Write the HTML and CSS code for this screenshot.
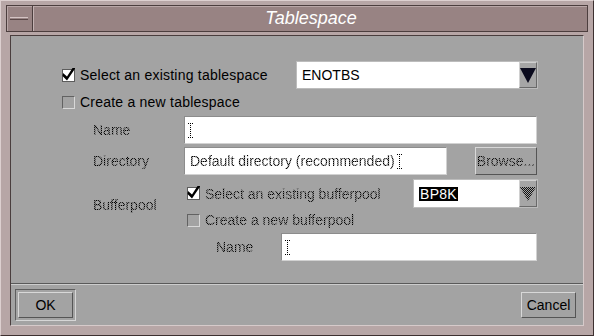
FILE: index.html
```html
<!DOCTYPE html>
<html>
<head>
<meta charset="utf-8">
<title>Tablespace</title>
<link rel="stylesheet" href="styles.css">
</head>
<body>
<svg width="0" height="0" class="defs">
  <defs>
    <pattern id="stip" width="2" height="2" patternUnits="userSpaceOnUse">
      <rect x="0" y="0" width="1" height="1" fill="#111"/>
      <rect x="1" y="1" width="1" height="1" fill="#111"/>
    </pattern>
  </defs>
</svg>
<div class="window">
  <div class="titlebar">
    <div class="menubtn"><span class="menubar"></span></div>
    <div class="title">Tablespace</div>
  </div>
  <div class="panel">
    <div class="form">
      <div class="row row-main">
        <div class="check check-main">
          <span class="box box-on"><svg width="13" height="13" viewBox="0 0 13 13"><path d="M1 5 L5 8.5 L10.5 0 L13.5 0 L5 12.5 L0.5 8 Z" fill="#000"/></svg></span>
          <span class="txt en">Select an existing tablespace</span>
        </div>
        <div class="combo combo-main">
          <div class="combo-value">ENOTBS</div>
          <div class="combo-arrow"><svg width="16" height="16" viewBox="0 0 16 16"><path d="M0 1 H16 L8 16 Z" fill="#0b0b1e"/></svg></div>
        </div>
      </div>
      <div class="row row-small">
        <div class="check">
          <span class="box box-off"></span>
          <span class="txt en">Create a new tablespace</span>
        </div>
      </div>
      <div class="row row-field gap6">
        <div class="label dis">Name</div>
        <div class="field field-name"><svg class="ibeam" width="5" height="15" viewBox="0 0 5 15"><path d="M0 0.5H5M0 14.5H5M2.5 0V15" stroke="#000" stroke-width="1" stroke-dasharray="1 1"/></svg></div>
      </div>
      <div class="row row-field gap3">
        <div class="label dis">Directory</div>
        <div class="field field-dir"><span class="dis">Default directory (recommended)</span><svg class="ibeam" width="5" height="15" viewBox="0 0 5 15"><path d="M0 0.5H5M0 14.5H5M2.5 0V15" stroke="#000" stroke-width="1" stroke-dasharray="1 1"/></svg></div>
        <div class="btn btn-browse"><span class="dis">Browse...</span></div>
      </div>
      <div class="buffer">
        <div class="label buffer-label dis">Bufferpool</div>
        <div class="buffer-rows">
          <div class="row row-buf1">
            <div class="check check-buf">
              <span class="box box-on"><svg width="13" height="13" viewBox="0 0 13 13"><path d="M1 5 L5 8.5 L10.5 0 L13.5 0 L5 12.5 L0.5 8 Z" fill="#000"/></svg></span>
              <span class="txt dis">Select an existing bufferpool</span>
            </div>
            <div class="combo combo-buf">
              <div class="combo-value"><span class="sel">BP8K</span></div>
              <div class="combo-arrow"><svg width="16" height="14" viewBox="0 0 16 14"><path d="M0 0 H16 L8 14 Z" fill="url(#stip)"/></svg></div>
            </div>
          </div>
          <div class="row row-small row-buf2">
            <div class="check">
              <span class="box box-off"></span>
              <span class="txt dis">Create a new bufferpool</span>
            </div>
          </div>
        </div>
      </div>
      <div class="row row-field row-bufname">
        <div class="label label-bufname dis">Name</div>
        <div class="field field-bufname"><svg class="ibeam" width="5" height="15" viewBox="0 0 5 15"><path d="M0 0.5H5M0 14.5H5M2.5 0V15" stroke="#000" stroke-width="1" stroke-dasharray="1 1"/></svg></div>
      </div>
    </div>
    <div class="sep"></div>
    <div class="buttons">
      <div class="default-ring"><div class="btn btn-action">OK</div></div>
      <div class="btn btn-action">Cancel</div>
    </div>
  </div>
</div>
</body>
</html>
```

FILE: styles.css
```css
* { box-sizing: border-box; }
html, body { margin: 0; padding: 0; }
body {
  width: 594px;
  height: 336px;
  overflow: hidden;
  background: #b7a6a6;
  font-family: "Liberation Sans", Arial, sans-serif;
  font-size: 14px;
  color: #000;
}
.defs { display: block; width: 0; height: 0; }

.window {
  width: 594px;
  height: 336px;
  background: #b7a6a6;
  border: 1px solid;
  border-color: #ddd0d0 #3d3030 #3d3030 #ddd0d0;
  padding: 4px 5px 9px 5px;
  display: flex;
  flex-direction: column;
}

.titlebar {
  height: 27px;
  flex: none;
  display: flex;
  background: #988383;
  border: 1px solid #4c3e3e;
  box-shadow: inset 1px 1px #b9a7a7;
}
.menubtn {
  width: 26px;
  flex: none;
  border-right: 1px solid #4c3e3e;
  box-shadow: 1px 0 #c4b3b3;
  padding: 11px 0 0 3px;
}
.menubar {
  display: block;
  width: 18px;
  height: 3px;
  background: #9a8585;
  border-top: 1px solid #d4c4c4;
  border-bottom: 1px solid #5a4848;
}
.title {
  flex: 1;
  text-align: center;
  color: #fff;
  font-style: italic;
  font-size: 18px;
  line-height: 24px;
  padding-left: 2px;
}

.panel {
  flex: 1;
  margin: 3px 4px 0;
  background: #a3a3a3;
  border: 1px solid;
  border-color: #4a3e3e #d6caca #d6caca #4a3e3e;
  display: flex;
  flex-direction: column;
}

.form {
  flex: 1;
  padding: 25px 0 0 51px;
}

.row { display: flex; align-items: center; }
.row-main { height: 28px; }
.row-small { height: 16px; margin-top: 5px; }
.row-field { height: 28px; }
.gap6 { margin-top: 6px; }
.gap3 { margin-top: 3px; }

.check { display: flex; align-items: center; gap: 5px; }
.check-main { width: 235px; }
.check-buf { width: 226px; }

.box {
  width: 13px;
  height: 13px;
  flex: none;
  display: block;
}
.box svg { display: block; }
.box-on {
  background: #fff;
  border: 1px solid #5c5c5c;
  overflow: visible;
}
.box-on svg { margin: -2px 0 0 -1px; }
.box-off {
  background: #a3a3a3;
  border: 1px solid;
  border-color: #626262 #d8d8d8 #d8d8d8 #626262;
}

.txt { white-space: nowrap; }
.en { letter-spacing: 0.22px; }

.dis {
  background: repeating-conic-gradient(#000 0 25%, #7c7c7c 0 50%) 0 0 / 2px 2px;
  -webkit-background-clip: text;
  background-clip: text;
  color: transparent;
  white-space: nowrap;
}

.combo {
  display: flex;
  height: 28px;
  border: 1px solid #bcbcbc;
}
.combo-main { width: 242px; margin-left: -1px; }
.combo-buf { width: 125px; height: 29px; }
.combo-value {
  flex: 1;
  background: #fff;
  display: flex;
  align-items: center;
  padding-left: 5px;
}
.combo-arrow {
  width: 18px;
  flex: none;
  background: #a6a6a6;
  border: 1px solid;
  border-color: #d0d0d0 #6a6a6a #6a6a6a #d0d0d0;
  display: flex;
  align-items: center;
  justify-content: center;
}
.combo-arrow svg { display: block; }
.sel {
  background: #000;
  color: #fff;
  line-height: 14px;
  padding: 0 1px;
  letter-spacing: 0.3px;
}

.label {
  width: 122px;
  flex: none;
  padding-left: 31px;
}

.field {
  height: 28px;
  background: #fff;
  border: 1px solid;
  border-color: #8c8c8c #d2d2d2 #d2d2d2 #8c8c8c;
  display: flex;
  align-items: center;
  padding-left: 3px;
}
.ibeam { display: block; flex: none; }
.field-name { width: 353px; }
.field-dir { width: 263px; padding-left: 5px; }
.field-dir .ibeam { margin-left: 2px; }
.field-bufname { width: 256px; }

.btn {
  display: flex;
  align-items: center;
  justify-content: center;
  background: #a3a3a3;
  border: 1px solid;
  border-color: #d8d8d8 #555 #555 #d8d8d8;
}
.btn-browse { width: 62px; height: 28px; margin-left: 28px; }

.buffer { display: flex; margin-top: 4px; }
.buffer-label { width: 125px; align-self: center; padding-top: 2px; }
.buffer-rows { display: flex; flex-direction: column; }
.row-buf1 { height: 29px; }
.row-buf2 { margin-top: 4px; }

.row-bufname { margin-top: 5px; }
.label-bufname { width: 219px; padding-left: 154px; }

.sep {
  height: 2px;
  flex: none;
  border-top: 1px solid #5a5a5a;
  border-bottom: 1px solid #cdcdcd;
}

.buttons {
  height: 40px;
  flex: none;
  display: flex;
  align-items: center;
  justify-content: space-between;
  padding: 0 7px 0 4px;
}
.default-ring {
  width: 61px;
  height: 32px;
  border: 1px solid;
  border-color: #5e5e5e #d6d6d6 #d6d6d6 #5e5e5e;
  padding: 2px;
  margin-top: -1px;
}
.btn-action { width: 55px; height: 26px; }
.default-ring .btn-action { width: 100%; height: 100%; }
```
